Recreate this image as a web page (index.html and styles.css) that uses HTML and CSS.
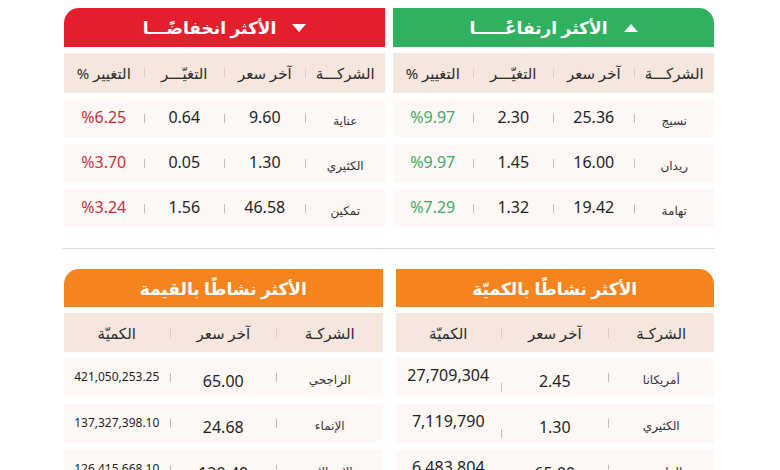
FILE: index.html
```html
<!DOCTYPE html>
<html lang="ar" dir="rtl">
<head>
<meta charset="utf-8">
<title>الأكثر ارتفاعاً وانخفاضاً</title>
<link rel="stylesheet" href="styles.css">
</head>
<body>
<main class="page">
  <div class="pair top">
    <section class="panel right-panel">
      <div class="title green"><span class="tri tri-up"></span><span>الأكثر ارتفاعًـــــا</span></div>
      <div class="row head"><span class="c">الشركـــة</span><i class="sep"></i><span class="c">آخر سعر</span><i class="sep"></i><span class="c">التغيّـــر</span><i class="sep"></i><span class="c">التغيير %</span></div>
      <div class="row data"><span class="c name">نسيج</span><i class="sep"></i><span class="c num">25.36</span><i class="sep"></i><span class="c num">2.30</span><i class="sep"></i><span class="c num pos">%9.97</span></div>
      <div class="row data"><span class="c name">ريدان</span><i class="sep"></i><span class="c num">16.00</span><i class="sep"></i><span class="c num">1.45</span><i class="sep"></i><span class="c num pos">%9.97</span></div>
      <div class="row data"><span class="c name">تهامة</span><i class="sep"></i><span class="c num">19.42</span><i class="sep"></i><span class="c num">1.32</span><i class="sep"></i><span class="c num pos">%7.29</span></div>
    </section>
    <section class="panel left-panel">
      <div class="title red"><span class="tri tri-down"></span><span>الأكثر انخفاضًـــا</span></div>
      <div class="row head"><span class="c">الشركـــة</span><i class="sep"></i><span class="c">آخر سعر</span><i class="sep"></i><span class="c">التغيّـــر</span><i class="sep"></i><span class="c">التغيير %</span></div>
      <div class="row data"><span class="c name">عناية</span><i class="sep"></i><span class="c num">9.60</span><i class="sep"></i><span class="c num">0.64</span><i class="sep"></i><span class="c num neg">%6.25</span></div>
      <div class="row data"><span class="c name">الكثيري</span><i class="sep"></i><span class="c num">1.30</span><i class="sep"></i><span class="c num">0.05</span><i class="sep"></i><span class="c num neg">%3.70</span></div>
      <div class="row data"><span class="c name">تمكين</span><i class="sep"></i><span class="c num">46.58</span><i class="sep"></i><span class="c num">1.56</span><i class="sep"></i><span class="c num neg">%3.24</span></div>
    </section>
  </div>

  <hr class="divider">

  <div class="pair bottom">
    <section class="panel right-panel">
      <div class="title orange"><span>الأكثر نشاطًا بالكميّة</span></div>
      <div class="row head"><span class="c">الشركـة</span><i class="sep"></i><span class="c">آخر سعر</span><i class="sep"></i><span class="c">الكميّة</span></div>
      <div class="row data"><span class="c name">أمريكانا</span><i class="sep"></i><span class="c num low">2.45</span><i class="sep sep-low"></i><span class="c num high">27,709,304</span></div>
      <div class="row data"><span class="c name">الكثيري</span><i class="sep"></i><span class="c num low">1.30</span><i class="sep sep-low"></i><span class="c num high">7,119,790</span></div>
      <div class="row data"><span class="c name">الراجحي</span><i class="sep"></i><span class="c num low">65.00</span><i class="sep sep-low"></i><span class="c num high">6,483,804</span></div>
    </section>
    <section class="panel left-panel">
      <div class="title orange"><span>الأكثر نشاطًا بالقيمة</span></div>
      <div class="row head"><span class="c">الشركـة</span><i class="sep"></i><span class="c">آخر سعر</span><i class="sep"></i><span class="c">الكميّة</span></div>
      <div class="row data"><span class="c name">الراجحي</span><i class="sep"></i><span class="c num low">65.00</span><i class="sep"></i><span class="c num small">421,050,253.25</span></div>
      <div class="row data"><span class="c name">الإنماء</span><i class="sep"></i><span class="c num low">24.68</span><i class="sep"></i><span class="c num small">137,327,398.10</span></div>
      <div class="row data"><span class="c name">الاتصالات</span><i class="sep"></i><span class="c num low">120.40</span><i class="sep"></i><span class="c num small">126,415,668.10</span></div>
    </section>
  </div>
</main>
</body>
</html>
```

FILE: styles.css
```css
html, body {
  margin: 0;
  padding: 0;
  background: #ffffff;
}

body {
  font-family: "Noto Sans", "DejaVu Sans", sans-serif;
  color: #222;
  width: 780px;
  height: 470px;
  overflow: hidden;
}

.page {
  width: 650px;
  margin-right: 66px;
  padding-top: 8px;
}

.pair {
  display: grid;
  grid-template-columns: 1fr 1fr;
}

.pair.top { column-gap: 8px; }
.pair.bottom { column-gap: 13px; }

.panel {
  display: flex;
  flex-direction: column;
}

.title {
  height: 39px;
  display: flex;
  align-items: center;
  justify-content: center;
  gap: 16px;
  color: #fff;
  font-size: 17px;
  font-weight: 600;
}

.bottom .title { height: 38px; }

.right-panel .title { border-top-right-radius: 15px; }
.left-panel .title { border-top-left-radius: 15px; }

.green { background: #2fb15f; }
.red { background: #e31f2d; }
.orange { background: #f5841f; }

.tri {
  width: 0;
  height: 0;
  border-left: 7px solid transparent;
  border-right: 7px solid transparent;
}
.tri-up { border-bottom: 8px solid #fff; }
.tri-down { border-top: 8px solid #fff; }

.row {
  display: flex;
  align-items: center;
}

.head {
  height: 40px;
  margin-top: 6px;
  background: #f5e7de;
  font-size: 15px;
  color: #2b2b2b;
}

.data {
  height: 38px;
  margin-top: 7px;
  background: #fdf8f5;
}

.head + .data { margin-top: 6px; }

.bottom .head { height: 39px; }
.bottom .data { height: 39px; }

.c {
  flex: 1;
  text-align: center;
}

.sep {
  width: 1px;
  height: 10px;
  background: #d9cdc6;
  flex: none;
}

.data .sep {
  height: 9px;
  background: #c4bcb8;
}

.name {
  font-size: 12px;
  color: #333;
  padding-top: 4px;
}

.num {
  font-size: 16px;
  color: #1f1f1f;
  padding-bottom: 2px;
}

.pos { color: #43a86b; }
.neg { color: #c7303a; }

.num.small { font-size: 12px; }

.num.low { padding-top: 6px; padding-bottom: 0; }
.num.high { padding-bottom: 6px; }

.sep-low { align-self: flex-end; margin-bottom: 5px; }

.divider {
  border: 0;
  height: 1px;
  background: #e2dcd8;
  margin: 21px -1px 20px -2px;
}
```
